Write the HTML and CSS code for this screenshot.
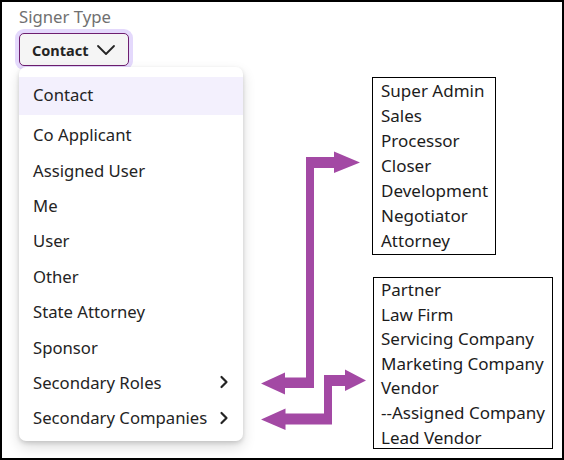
FILE: index.html
```html
<!DOCTYPE html>
<html lang="en">
<head>
<meta charset="utf-8">
<title>Signer Type</title>
<link rel="stylesheet" href="styles.css">
</head>
<body>
<div class="frame">
  <div class="left">
    <div class="label">Signer Type</div>
    <button class="select" type="button">
      <span>Contact</span>
      <svg class="chev-down" width="20" height="12" viewBox="0 0 20 12"><path d="M2 2 L10 10 L18 2" fill="none" stroke="#242424" stroke-width="1.8" stroke-linecap="round" stroke-linejoin="round"/></svg>
    </button>
    <ul class="menu">
      <li class="item first">Contact</li>
      <li class="item">Co Applicant</li>
      <li class="item">Assigned User</li>
      <li class="item">Me</li>
      <li class="item">User</li>
      <li class="item">Other</li>
      <li class="item">State Attorney</li>
      <li class="item">Sponsor</li>
      <li class="item sub"><span>Secondary Roles</span><svg width="10" height="14" viewBox="0 0 10 14"><path d="M2.5 2 L7.5 7 L2.5 12" fill="none" stroke="#242424" stroke-width="2.2" stroke-linecap="round" stroke-linejoin="round"/></svg></li>
      <li class="item sub"><span>Secondary Companies</span><svg width="10" height="14" viewBox="0 0 10 14"><path d="M2.5 2 L7.5 7 L2.5 12" fill="none" stroke="#242424" stroke-width="2.2" stroke-linecap="round" stroke-linejoin="round"/></svg></li>
    </ul>
  </div>
  <div class="notes">
    <ul class="note roles">
      <li>Super Admin</li>
      <li>Sales</li>
      <li>Processor</li>
      <li>Closer</li>
      <li>Development</li>
      <li>Negotiator</li>
      <li>Attorney</li>
    </ul>
    <ul class="note companies">
      <li>Partner</li>
      <li>Law Firm</li>
      <li>Servicing Company</li>
      <li>Marketing Company</li>
      <li>Vendor</li>
      <li>--Assigned Company</li>
      <li>Lead Vendor</li>
    </ul>
  </div>
  <svg class="arrows" width="564" height="460" viewBox="0 0 564 460">
    <polygon fill="#a349a4" points="306,157 334,157 334,151.5 360,162.5 334,173 334,168 314,168 314,388 285,388 285,394.5 261,383.5 285,372.5 285,377.5 306,377.5"/>
    <polygon fill="#a349a4" points="261,419.5 285.5,408.5 285.5,413.5 324,413.5 324,375 345,375 345,369.5 366,380.5 345,391 345,386 332,386 332,424.5 285.5,424.5 285.5,430"/>
  </svg>
</div>
</body>
</html>
```
FILE: styles.css
```css
* { box-sizing: border-box; }
html, body { margin: 0; padding: 0; background: #fff; }
body { font-family: "Noto Sans", "Open Sans", sans-serif; color: #242424; }
.frame {
  position: relative;
  width: 564px;
  height: 460px;
  border: 2px solid #000;
  display: flex;
  background: #fff;
}
.left {
  width: 241px;
  padding-left: 17px;
  padding-top: 4px;
  display: flex;
  flex-direction: column;
  align-items: flex-start;
}
.label {
  font-size: 16.7px;
  line-height: 22px;
  color: #707070;
  margin-bottom: 5px;
}
.select {
  display: flex;
  align-items: center;
  gap: 7px;
  width: 110px;
  height: 33px;
  padding: 0 0 0 12px;
  border: 1px solid #6e1f70;
  border-radius: 5px;
  background: #f5f5f5;
  box-shadow: 0 0 0 4px #e4d9fc;
  font-family: "Noto Sans", sans-serif;
  font-size: 14.5px;
  font-weight: 700;
  color: #242424;
}
.menu {
  position: relative;
  z-index: 1;
  list-style: none;
  margin: 1px 0 0 0;
  padding: 10px 0 5px 0;
  width: 224px;
  background: #fff;
  border-radius: 7px;
  box-shadow: 0 2px 4px rgba(0,0,0,0.14), 0 6px 14px rgba(0,0,0,0.14);
}
.item {
  height: 35.4px;
  display: flex;
  align-items: center;
  justify-content: space-between;
  padding: 0 14px 0 14px;
  font-size: 16.7px;
  color: #242424;
}
.item.first {
  height: 38px;
  margin-bottom: 2px;
  padding-bottom: 3px;
  background: #f3f0fd;
}
.notes {
  margin-left: 129px;
  padding-top: 75px;
  display: flex;
  flex-direction: column;
  align-items: flex-start;
}
.note {
  list-style: none;
  margin: 0;
  border: 1px solid #000;
  padding: 0 0 0 8px;
  font-size: 17px;
  color: #1c1c1c;
}
.roles { width: 124px; height: 178px; line-height: 25px; }
.companies { width: 180px; height: 172px; line-height: 24.6px; margin-top: 22px; margin-left: 1px; padding: 0 0 0 7px; }
.arrows {
  position: absolute;
  left: -2px;
  top: -2px;
  z-index: 2;
  pointer-events: none;
}
```
